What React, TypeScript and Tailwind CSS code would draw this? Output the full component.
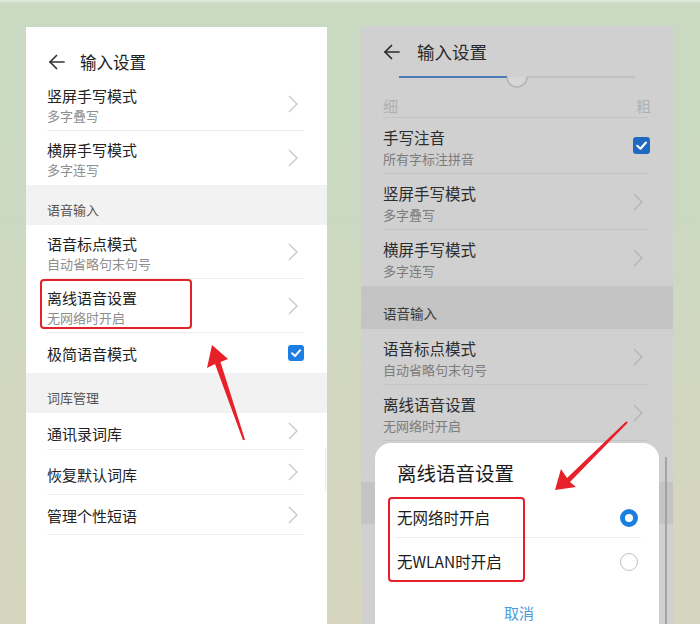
import React from "react";

const Chevron = ({ c = "#c9c9c9" }: { c?: string }) => (
  <svg width="10" height="18" viewBox="0 0 10 18">
    <polyline points="1,1 9,9 1,17" fill="none" stroke={c} strokeWidth="1.4" />
  </svg>
);

const Check = ({ bg = "#1d7fe5", size = 16 }: { bg?: string; size?: number }) => (
  <svg width={size} height={size} viewBox="0 0 16 16">
    <rect x="0" y="0" width="16" height="16" rx="3" fill={bg} />
    <polyline points="4,8.3 7,11 12.2,5.2" fill="none" stroke="#fff" strokeWidth="2" strokeLinecap="round" strokeLinejoin="round" />
  </svg>
);

const BackArrow = ({ c = "#333" }: { c?: string }) => (
  <svg width="17" height="16" viewBox="0 0 17 16">
    <line x1="2" y1="8" x2="16" y2="8" stroke={c} strokeWidth="1.7" strokeLinecap="round" />
    <polyline points="8.5,1.5 2,8 8.5,14.5" fill="none" stroke={c} strokeWidth="1.7" strokeLinecap="round" strokeLinejoin="round" />
  </svg>
);

function LeftTwo({ t, s, border = true }: { t: string; s: string; border?: boolean }) {
  return (
    <div className={"flex justify-between h-[54px] " + (border ? "border-b border-[#ececec]" : "")}>
      <div className="pt-[9px]">
        <div className="text-[15px] leading-[20px] text-[#222]">{t}</div>
        <div className="mt-[1px] text-[13px] leading-[18px] text-[#8e8e8e]">{s}</div>
      </div>
      <div className="self-center mr-[6px]">
        <Chevron />
      </div>
    </div>
  );
}

function LeftOne({ t, h, pt }: { t: string; h: string; pt: string }) {
  return (
    <div className={"flex justify-between border-b border-[#ececec] " + h}>
      <div className={"text-[15px] leading-[20px] text-[#222] " + pt}>{t}</div>
      <div className="self-center mr-[6px]">
        <Chevron />
      </div>
    </div>
  );
}

function RightTwo({ t, s, right, border = true }: { t: string; s: string; right?: React.ReactNode; border?: boolean }) {
  return (
    <div className={"flex justify-between h-[56px] " + (border ? "border-b border-[#c5c5c5]" : "")}>
      <div className="pt-[9px]">
        <div className="text-[15.5px] leading-[20px] text-[#2c2c2c]">{t}</div>
        <div className="mt-[3px] text-[13px] leading-[18px] text-[#7c7c7c]">{s}</div>
      </div>
      <div className="self-center">{right ?? <div className="mr-[5px]"><Chevron c="#b4b4b4" /></div>}</div>
    </div>
  );
}

export default function App() {
  return (
    <div className="relative w-[700px] h-[624px] overflow-hidden font-['Noto_Sans_CJK_SC',sans-serif] bg-[linear-gradient(180deg,#e2ebe1_0px,#c9d9c2_4px,#cbd9c2_200px,#d3d6bf_420px,#d6d6be_624px)]">
      <div className="flex items-start">
        {/* Left panel */}
        <div className="relative ml-[26px] mt-[27px] w-[301px] h-[597px] bg-white">
          <div className="h-[50px] pt-[20px] pl-[22px] flex items-center">
            <BackArrow />
            <span className="ml-[15px] text-[16.5px] leading-[22px] text-[#222]">输入设置</span>
          </div>
          <div className="pl-[21px] pr-[23px]">
            <LeftTwo t="竖屏手写模式" s="多字叠写" />
            <LeftTwo t="横屏手写模式" s="多字连写" border={false} />
          </div>
          <div className="h-[40px] bg-[#f2f2f2] pl-[21px] pt-[16px] text-[13px] leading-[18px] text-[#555]">语音输入</div>
          <div className="pl-[21px] pr-[23px]">
            <LeftTwo t="语音标点模式" s="自动省略句末句号" />
            <LeftTwo t="离线语音设置" s="无网络时开启" />
            <div className="flex justify-between h-[40px]">
              <div className="pt-[11px] text-[15px] leading-[20px] text-[#222]">极简语音模式</div>
              <div className="self-center">
                <Check />
              </div>
            </div>
          </div>
          <div className="h-[40px] bg-[#f2f2f2] pl-[21px] pt-[16px] text-[13px] leading-[18px] text-[#555]">词库管理</div>
          <div className="pl-[21px] pr-[23px]">
            <LeftOne t="通讯录词库" h="h-[37px]" pt="pt-[11px]" />
            <LeftOne t="恢复默认词库" h="h-[45px]" pt="pt-[15px]" />
            <LeftOne t="管理个性短语" h="h-[40px]" pt="pt-[11px]" />
          </div>
          <div className="absolute left-[299px] top-[420px] w-[1px] h-[44px] bg-[#ececec]" />
        </div>

        {/* Right panel */}
        <div className="relative ml-[34px] mt-[26px] w-[312px] h-[598px] bg-[#d0d0d0]">
          <div className="h-[38px] pt-[14px] pl-[22px] flex items-center">
            <BackArrow c="#2a2a2a" />
            <span className="ml-[17px] text-[17.5px] leading-[24px] text-[#2a2a2a]">输入设置</span>
          </div>
          <div className="h-[26px]">
            <svg width="312" height="26" viewBox="0 0 312 26">
              <line x1="38" y1="13" x2="146" y2="13" stroke="#4a78b8" strokeWidth="2" />
              <line x1="166" y1="13" x2="274" y2="13" stroke="#bdbdbd" strokeWidth="1.5" />
              <path d="M146,13 A10,10 0 0 0 166,13" fill="#d6d6d6" stroke="#b2b2b2" strokeWidth="1.4" />
            </svg>
          </div>
          <div className="mx-[22px] mr-[25px] h-[28px] pt-[6px] flex justify-between border-b border-[#c5c5c5] text-[15px] leading-[20px] text-[#b0b0b0]">
            <span>细</span>
            <span className="-mr-[3px]">粗</span>
          </div>
          <div className="pl-[22px] pr-[25px]">
            <RightTwo t="手写注音" s="所有字标注拼音" right={<div className="-mr-[2px]"><Check bg="#1f6ac0" size={17} /></div>} />
            <RightTwo t="竖屏手写模式" s="多字叠写" />
            <RightTwo t="横屏手写模式" s="多字连写" border={false} />
          </div>
          <div className="h-[43px] bg-[#c4c4c4] pl-[22px] pt-[18px] text-[13.5px] leading-[18px] text-[#3a3a3a]">语音输入</div>
          <div className="pl-[22px] pr-[25px]">
            <RightTwo t="语音标点模式" s="自动省略句末句号" />
            <RightTwo t="离线语音设置" s="无网络时开启" />
            <div className="h-[41px]" />
          </div>
          <div className="h-[42px] bg-[#c4c4c4]" />

          <div className="absolute left-[304px] top-[431px] w-[2px] h-[170px] bg-[#a3a3a3]" />

          {/* Dialog */}
          <div className="absolute left-[14px] top-[417px] w-[284px] h-[200px] bg-white rounded-t-[16px]">
            <div className="h-[56px] pt-[17px] pl-[22px] text-[19.5px] leading-[26px] text-[#1b1b1b]">离线语音设置</div>
            <div className="ml-[20px] mr-[18px] h-[39px] border-b border-[#ececec] flex items-center justify-between">
              <span className="ml-[2px] text-[15.5px] text-[#1b1b1b]">无网络时开启</span>
              <span className="mr-[3px] w-[18px] h-[18px] rounded-full border-[5px] border-[#1a7fe0] bg-white" />
            </div>
            <div className="ml-[20px] mr-[18px] h-[48px] flex items-center justify-between">
              <span className="ml-[2px] text-[15.5px] text-[#1b1b1b]">无WLAN时开启</span>
              <span className="mr-[3px] w-[18px] h-[18px] rounded-full border-[1.5px] border-[#c2c2c2] bg-white" />
            </div>
            <div className="pt-[16px] text-center text-[15px] leading-[22px] text-[#4a9be0] pl-[4px]">取消</div>
          </div>
        </div>
      </div>

      {/* Annotations */}
      <div className="absolute left-[40px] top-[279px] w-[152px] h-[50px] border-[2.5px] border-[#e5202a] rounded-[4px]" />
      <div className="absolute left-[388px] top-[497px] w-[137px] h-[85px] border-[2.5px] border-[#e5202a] rounded-[4px]" />
      <svg className="absolute left-0 top-0 pointer-events-none" width="700" height="624" viewBox="0 0 700 624">
        <polygon
          points="212,345 228,359 220.5,362 245,439.7 243,440.3 215,364 207,368"
          fill="#e8202a"
        />
        <polygon
          points="555,490 561,469 567,478 626.3,421.3 627.7,422.7 570,482 576,487"
          fill="#e8202a"
        />
      </svg>
    </div>
  );
}
